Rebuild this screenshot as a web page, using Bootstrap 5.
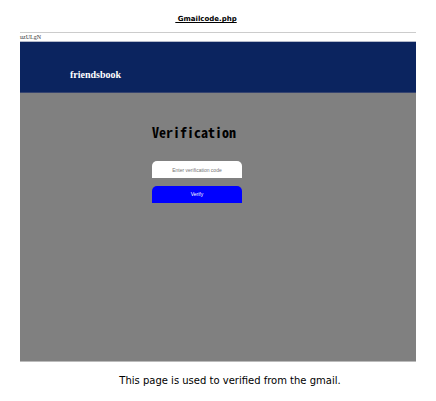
<!DOCTYPE html>
<html lang="en">
<head>
<meta charset="utf-8">
<meta name="viewport" content="width=device-width, initial-scale=1">
<title>Gmailcode.php</title>
<link href="https://cdn.jsdelivr.net/npm/bootstrap@5.3.0/dist/css/bootstrap.min.css" rel="stylesheet">
<style>
body { font-family: "DejaVu Sans", sans-serif; color: #000; background: #fff; }
.doc { padding: 14px 20px 0; }
.doc-title { font-size: 7px; line-height: 10px; font-weight: 700; white-space: pre; text-decoration: underline; margin: 0 0 8px; padding-right: 24px; }
.screen { border-top: 1px solid #ccc; border-bottom: 1px solid #bbb; }
.code-line { font: 6px/8px "Liberation Serif", serif; color: #333; border-bottom: 1px solid #b4bacb; }
.top-bar { background: #0b245f; border-bottom: 1px solid #35436f; padding: 24px 50px 8px; }
.brand { font: 700 10px/18px "Liberation Serif", serif; color: #fff; text-decoration: none; }
.page-area { background: #808080; padding: 28px 33.333% 158px; }
.heading { font: 700 14px/22px "Noto Sans Mono CJK SC", "DejaVu Sans Mono", monospace; margin: 0 0 18px; white-space: nowrap; }
.verify-form { width: 90px; }
.code-input, .verify-btn { border: 0; border-radius: 5px 5px 0 0; font: 5px/7px "Liberation Sans", sans-serif; text-align: center; padding: 5px 0; height: 17px; }
.code-input { background: #fff; color: #333; }
.code-input::placeholder { color: #757575; opacity: 1; }
.verify-btn, .verify-btn:hover { background: #00f; color: #fff; }
.note { font-size: 10px; line-height: 14px; margin: 12px 0 0; padding-left: 24px; }
</style>
</head>
<body>
<div class="doc">
<h1 class="doc-title text-center"> Gmailcode.php</h1>
<main class="screen">
<div class="code-line">uzULgN</div>
<header class="top-bar d-flex"><a class="brand" href="#">friendsbook</a></header>
<section class="page-area">
<h2 class="heading">Verification</h2>
<form class="verify-form d-grid gap-2">
<input class="code-input w-100" type="text" placeholder="Enter verification code" aria-label="Enter verification code">
<button class="verify-btn btn w-100" type="submit">Verify</button>
</form>
</section>
</main>
<p class="note text-center">This page is used to verified from the gmail.</p>
</div>
<script src="https://cdn.jsdelivr.net/npm/bootstrap@5.3.0/dist/js/bootstrap.bundle.min.js"></script>
</body>
</html>
